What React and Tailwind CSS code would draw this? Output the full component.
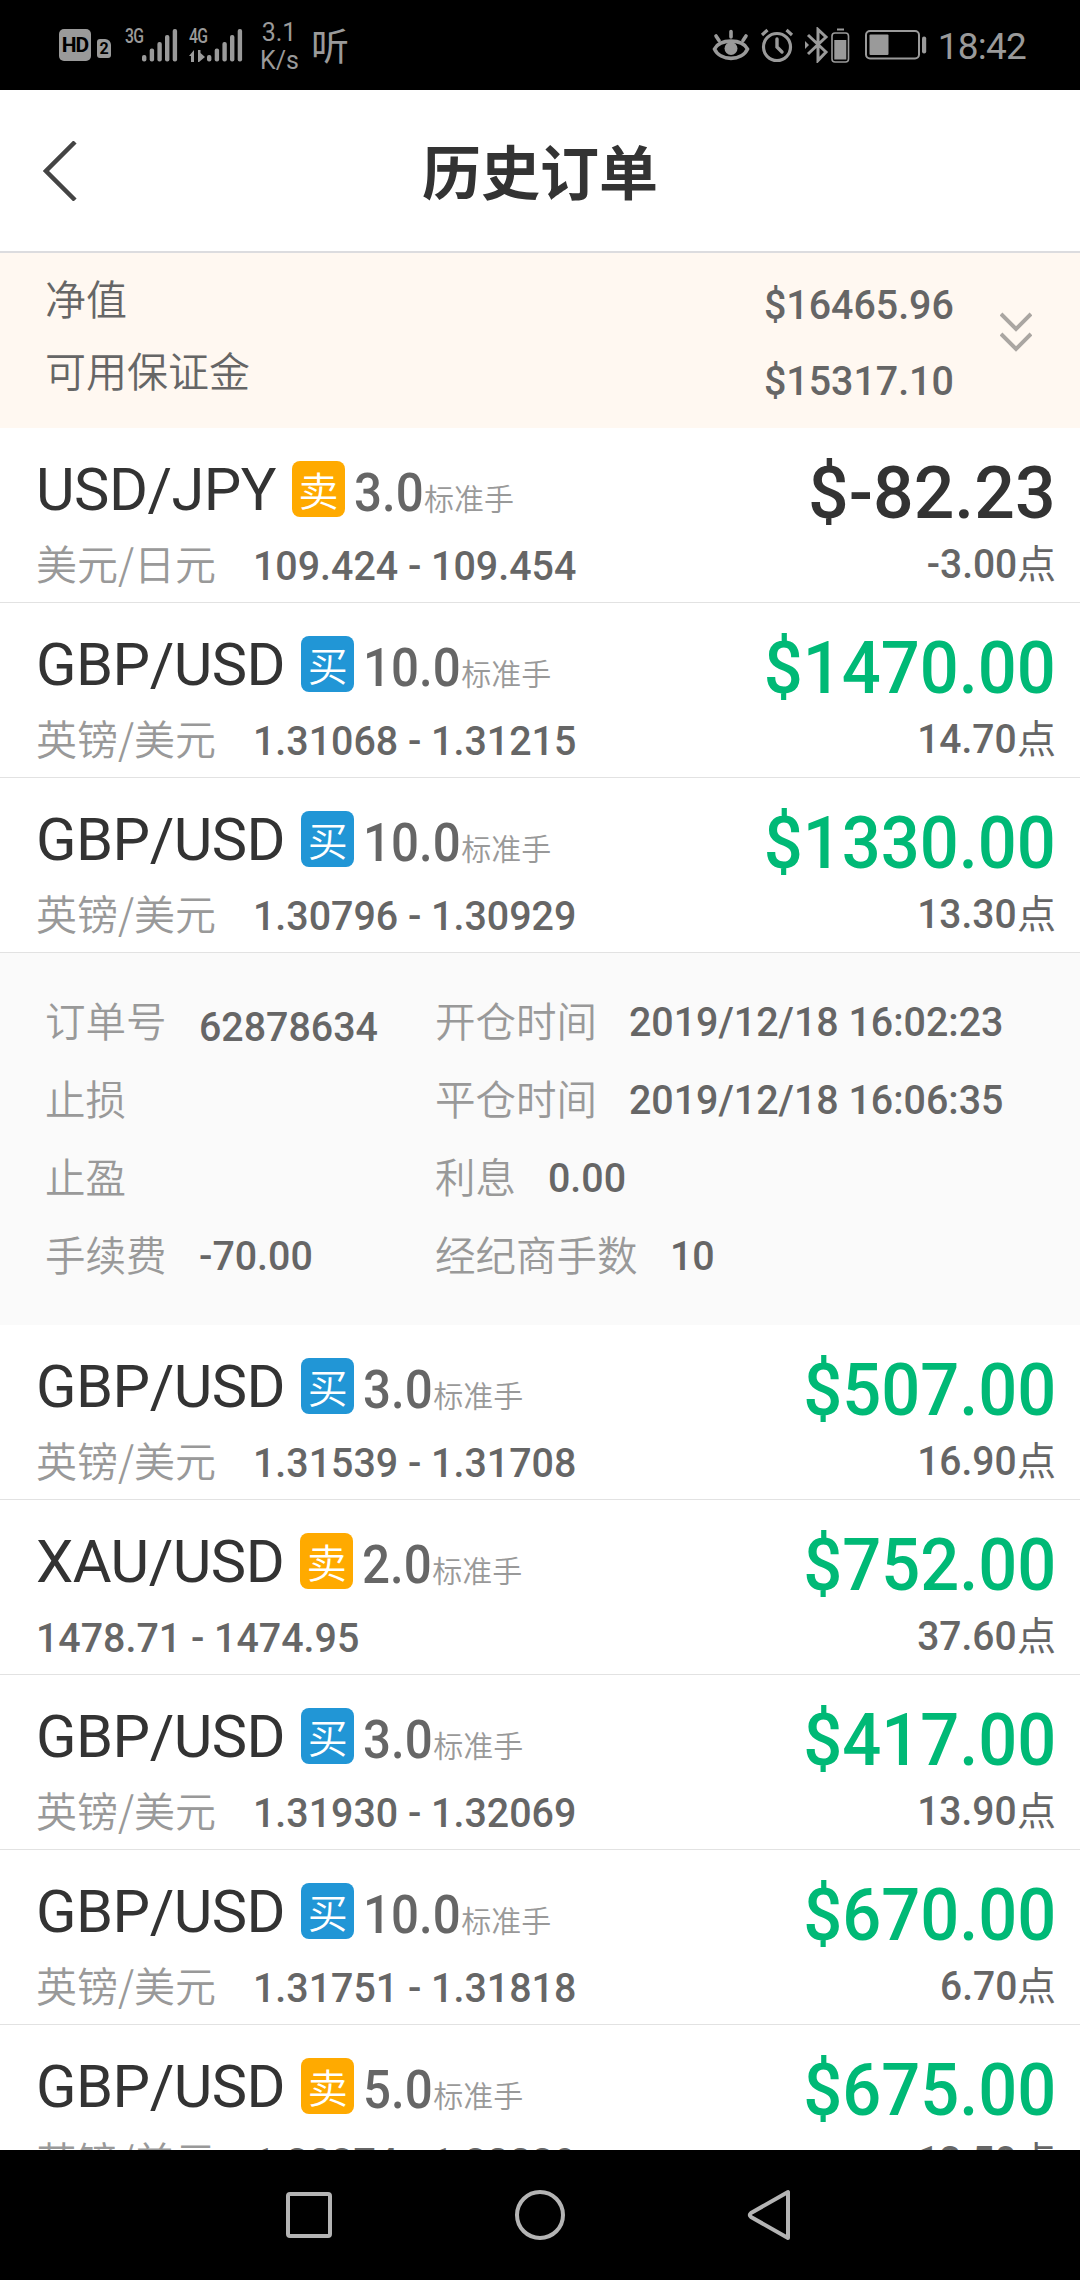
import clsx from "clsx"

const orders = [
  { id: 1, symbol: "USD/JPY", name: "美元/日元", side: "sell", lots: "3.0", price: "109.424 - 109.454", profit: "$-82.23", points: "-3.00", loss: true },
  { id: 2, symbol: "GBP/USD", name: "英镑/美元", side: "buy", lots: "10.0", price: "1.31068 - 1.31215", profit: "$1470.00", points: "14.70" },
  { id: 3, symbol: "GBP/USD", name: "英镑/美元", side: "buy", lots: "10.0", price: "1.30796 - 1.30929", profit: "$1330.00", points: "13.30", open: true },
  { id: 4, symbol: "GBP/USD", name: "英镑/美元", side: "buy", lots: "3.0", price: "1.31539 - 1.31708", profit: "$507.00", points: "16.90" },
  { id: 5, symbol: "XAU/USD", name: "", side: "sell", lots: "2.0", price: "1478.71 - 1474.95", profit: "$752.00", points: "37.60" },
  { id: 6, symbol: "GBP/USD", name: "英镑/美元", side: "buy", lots: "3.0", price: "1.31930 - 1.32069", profit: "$417.00", points: "13.90" },
  { id: 7, symbol: "GBP/USD", name: "英镑/美元", side: "buy", lots: "10.0", price: "1.31751 - 1.31818", profit: "$670.00", points: "6.70" },
  { id: 8, symbol: "GBP/USD", name: "英镑/美元", side: "sell", lots: "5.0", price: "1.32374 - 1.32239", profit: "$675.00", points: "13.50" },
]

const leftDetails = [
  { label: "订单号", value: "62878634", low: true },
  { label: "止损", value: "" },
  { label: "止盈", value: "" },
  { label: "手续费", value: "-70.00" },
]

const rightDetails = [
  { label: "开仓时间", value: "2019/12/18 16:02:23" },
  { label: "平仓时间", value: "2019/12/18 16:06:35" },
  { label: "利息", value: "0.00" },
  { label: "经纪商手数", value: "10" },
]

// ================= STATUS BAR =================
function SignalBars() {
  return (
    <svg width="36" height="34" viewBox="0 0 36 34" fill="#9a9a9a">
      <rect x="0" y="27" width="4.4" height="6.5" rx="2" />
      <rect x="7.7" y="20.5" width="4.4" height="13" rx="2" />
      <rect x="15.4" y="14" width="4.4" height="19.5" rx="2" />
      <rect x="23" y="7" width="4.4" height="26.5" rx="2" />
      <rect x="30.7" y="1" width="4.4" height="32.5" rx="2" />
    </svg>
  )
}

function StatusBar() {
  return (
    <div className="flex h-[90px] shrink-0 items-center bg-black text-[#9a9a9a] font-[Roboto,sans-serif]">
      <div className="ml-[59px] flex h-8 w-8 items-center justify-center rounded-[5px] bg-[#9a9a9a] text-[21px] font-bold leading-none tracking-[-1px] text-black">
        HD
      </div>
      <div className="ml-[6px] mt-[7px] flex h-[19px] w-[14px] items-center justify-center rounded-[3px] rounded-tr-[6px] bg-[#9a9a9a] text-[16px] font-bold leading-none text-black">
        2
      </div>
      <div className="ml-[14px] h-[34px] w-[18px] text-[21px] font-medium leading-[17px] tracking-[-1px] origin-left scale-x-[0.75]">
        3G
      </div>
      <div className="ml-[-1px]">
        <SignalBars />
      </div>
      <div className="ml-[11px] flex h-[34px] w-[18px] flex-col">
        <span className="text-[21px] font-medium leading-[17px] tracking-[-1px] origin-left scale-x-[0.75]">4G</span>
        <svg className="mt-[5px]" width="17" height="12" viewBox="0 0 17 12" fill="#9a9a9a">
          <path d="M5 0 V12 H2 V6 H0 Z" />
          <path d="M9 0 H11.500 V3 L16 7 L10 12 H9 Z" />
        </svg>
      </div>
      <SignalBars />
      <div className="ml-[17px] mt-[3px] w-[38px] text-[25px] leading-[28px] text-center">
        <div>3.1</div>
        <div>K/s</div>
      </div>
      <span className="ml-[13px] mt-[-3px] text-[38px] leading-none font-[Noto_Sans_CJK_SC,sans-serif]">听</span>

      <svg className="ml-auto" width="38" height="34" viewBox="0 0 38 34" fill="none" stroke="#9a9a9a" strokeWidth="3.600" strokeLinecap="round">
        <path d="M2.500 21 C8 10.500 30 10.500 35.500 21 C30 33.500 8 33.500 2.500 21 Z" />
        <circle cx="19" cy="20.500" r="6.500" fill="#9a9a9a" stroke="none" />
        <path d="M19 3.500 V9 M4 8 L7 12.500 M34 8 L31 12.500" />
      </svg>
      <svg className="ml-[10px]" width="34" height="36" viewBox="0 0 34 36" fill="none" stroke="#9a9a9a" strokeWidth="3.200" strokeLinecap="round">
        <circle cx="17" cy="20" r="13.500" />
        <path d="M17 12 V20 L22 25" strokeWidth="3.400" />
        <path d="M2 8 L7.500 3 M32 8 L26.500 3" strokeLinecap="butt" />
      </svg>
      <svg className="ml-[11px]" width="46" height="36" viewBox="0 0 46 36" fill="none" stroke="#9a9a9a">
        <path d="M3 8 L21 25 L13 33.500 V2.500 L21 10 L3 27" strokeWidth="3" />
        <path d="M0 14 L4 18 L0 22 Z" fill="#9a9a9a" stroke="none" />
        <rect x="27" y="6" width="16.500" height="29" rx="3" strokeWidth="1.600" />
        <rect x="29.300" y="13" width="12" height="19.500" fill="#9a9a9a" stroke="none" />
        <path d="M32 2.500 H39" strokeWidth="2" />
      </svg>
      <svg className="ml-[14px]" width="62" height="30" viewBox="0 0 62 30" fill="none" stroke="#9a9a9a" strokeWidth="2">
        <rect x="1" y="1" width="53" height="27.500" rx="4" />
        <rect x="4.500" y="4.500" width="19" height="20.500" rx="1" fill="#9a9a9a" stroke="none" />
        <rect x="57" y="6.500" width="4.200" height="17" rx="2" fill="#9a9a9a" stroke="none" />
      </svg>
      <span className="ml-[11px] mr-[54px] mt-[2px] text-[37px] leading-none tracking-[-0.8px]">18:42</span>
    </div>
  )
}

// ================= HEADER =================
function Header() {
  return (
    <div className="grid h-[163px] shrink-0 grid-cols-[1fr_auto_1fr] items-center border-b-2 border-[#dcdcdf] bg-white">
      <svg className="ml-[43px] self-center" width="36" height="60" viewBox="0 0 36 60" fill="none" stroke="#444" strokeWidth="4.500">
        <path d="M32 1 L3 30 L32 59" />
      </svg>
      <h1 className="mt-[-1px] text-[59px] font-bold leading-[70px] text-[#333]">历史订单</h1>
    </div>
  )
}

// ================= ACCOUNT =================
function Account() {
  return (
    <div className="flex h-[175px] shrink-0 bg-[#fff8f1] pl-[45px] text-[#666]">
      <div className="flex-1 pt-[8px] text-[41px] font-[350] leading-[72px]">
        <div>净值</div>
        <div>可用保证金</div>
      </div>
      <div className="origin-right scale-x-[0.96] pt-[14px] text-right text-[41px] font-medium leading-[76px] font-[Roboto,sans-serif]">
        <div>$16465.96</div>
        <div>$15317.10</div>
      </div>
      <svg className="ml-[46px] mr-[48px] mt-[59px]" width="32" height="42" viewBox="0 0 32 42" fill="none" stroke="#aaa6a2" strokeWidth="4">
        <path d="M1 2 L16 17 L31 2 M1 22 L16 37 L31 22" />
      </svg>
    </div>
  )
}

// ================= ORDERS =================
function Detail({ label, value, low }) {
  return (
    <div className="flex h-[78px] items-center">
      <span className="mt-[-2px] text-[40.500px] font-[350] text-[#999]">{label}</span>
      <span
        className={clsx(
          "ml-[32px] origin-left scale-x-[0.96] whitespace-nowrap text-[41px] font-medium text-[#666] font-[Roboto,sans-serif]",
          low ? "mt-[14px]" : "mt-[4px]"
        )}
      >
        {value}
      </span>
    </div>
  )
}

function OrderDetails() {
  return (
    <div className="grid h-[372px] shrink-0 grid-cols-[390px_1fr] bg-[#fafafa] pl-[45px] pt-[29px]">
      <div>
        {leftDetails.map((d) => (
          <Detail key={d.label} {...d} />
        ))}
      </div>
      <div>
        {rightDetails.map((d) => (
          <Detail key={d.label} {...d} />
        ))}
      </div>
    </div>
  )
}

function OrderRow({ order }) {
  return (
    <div className="flex h-[175px] shrink-0 justify-between border-b border-[#e2e2e2] bg-white pl-[36px] pr-[24px]">
      <div className="pt-[33px]">
        <div className="flex h-14 items-center">
          <span className="mt-[4px] text-[59.500px] leading-none tracking-[-0.5px] text-[#333] font-[Roboto,sans-serif]">{order.symbol}</span>
          <span
            className={clsx(
              "ml-[16px] flex h-14 w-[53px] items-center justify-center rounded-lg text-[40px] font-[350] leading-none text-white",
              order.side === "sell" ? "bg-[#ffaa00]" : "bg-[#2196d6]"
            )}
          >
            {order.side === "sell" ? "卖" : "买"}
          </span>
          <span
            className={clsx(
              "ml-[9px] mt-[8px] origin-left scale-x-[0.93] text-[53px] font-medium leading-none text-[#666] font-[Roboto,sans-serif]",
              order.lots.length > 3 ? "w-[98px]" : "w-[70px]"
            )}
          >
            {order.lots}
          </span>
          <span className="mt-[16px] text-[30px] font-[350] leading-none text-[#999]">标准手</span>
        </div>
        <div className="mt-[21px] flex h-[50px] items-center">
          {order.name && (
            <span className="mr-[37px] mt-[-1px] text-[41px] font-[350] leading-none text-[#999]">{order.name}</span>
          )}
          <span className="mt-[6px] origin-left scale-x-[0.96] text-[41px] font-medium leading-none text-[#666] font-[Roboto,sans-serif]">
            {order.price}
          </span>
        </div>
      </div>

      <div className="flex flex-col items-end pt-[33px]">
        <span
          className={clsx(
            "mt-[4px] h-14 origin-right text-[73px] font-medium leading-[56px] font-[Roboto,sans-serif]",
            order.loss ? "scale-x-[0.98] text-[#333]" : "scale-x-[0.94] text-[#00b976]"
          )}
        >
          {order.profit}
        </span>
        <div className="mt-[18px] flex h-[50px] items-center text-[#666]">
          <span className="mt-px origin-right scale-x-[0.95] text-[41px] font-medium leading-none font-[Roboto,sans-serif]">
            {order.points}
          </span>
          <span className="mt-[-5px] text-[39px] leading-none">点</span>
        </div>
      </div>
    </div>
  )
}

// ================= NAV =================
function NavBar() {
  return (
    <div className="flex h-[130px] shrink-0 items-center bg-black">
      <svg className="ml-[285px]" width="48" height="48" viewBox="0 0 48 48" fill="none" stroke="#b4b4b4" strokeWidth="4">
        <rect x="3" y="3" width="42" height="42" rx="2" />
      </svg>
      <svg className="ml-[181px]" width="52" height="52" viewBox="0 0 52 52" fill="none" stroke="#b4b4b4" strokeWidth="4">
        <circle cx="26" cy="26" r="23" />
      </svg>
      <svg className="ml-[181px]" width="44" height="52" viewBox="0 0 44 52" fill="none" stroke="#b4b4b4" strokeWidth="4" strokeLinejoin="round">
        <path d="M41 3 V49 L4 28 Q1.500 26 4 24 Z" />
      </svg>
    </div>
  )
}

export default function App() {
  return (
    <div className="flex h-[2280px] w-[1080px] flex-col overflow-hidden bg-white font-[Noto_Sans_CJK_SC,sans-serif]">
      <StatusBar />
      <Header />
      <Account />
      <div className="flex min-h-0 flex-1 flex-col overflow-hidden">
        {orders.map((order) => (
          <div key={order.id} className="shrink-0">
            <OrderRow order={order} />
            {order.open && <OrderDetails />}
          </div>
        ))}
      </div>
      <NavBar />
    </div>
  )
}
